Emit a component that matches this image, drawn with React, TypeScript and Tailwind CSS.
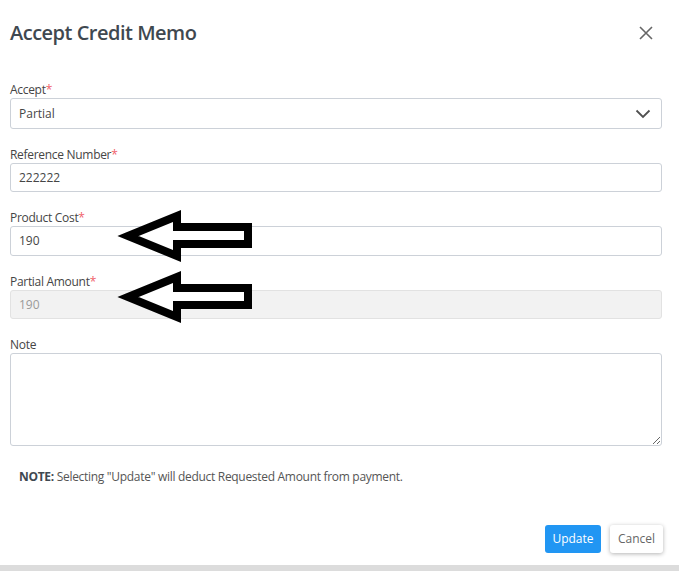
import React from "react";

const font = { fontFamily: '"Open Sans", "Noto Sans", Arial, sans-serif' };

function Label({ text }: { text: string }) {
  return (
    <div className="h-[16px] text-[12px] leading-[16px] tracking-[-0.3px] text-[#454545]">
      {text}
      <span className="text-[#f0606a]">*</span>
    </div>
  );
}

function Arrow() {
  return (
    <svg width="150" height="64" viewBox="0 0 150 64" className="pointer-events-none">
      <polygon
        points="16,31 65,11 65,22 136,22 136,39 65,39 65,51"
        fill="white"
        stroke="black"
        strokeWidth="8"
        strokeLinejoin="miter"
      />
    </svg>
  );
}

export default function App() {
  return (
    <div className="relative h-[571px] w-[679px] overflow-hidden bg-white" style={font}>
      <div className="h-[565px] pl-[10px] pr-[17px]">
        <div className="flex h-[70px] items-start justify-between pt-[19px]">
          <h2 className="text-[20px] font-semibold leading-[28px] tracking-[-0.5px] text-[#3f4850]">Accept Credit Memo</h2>
          <button className="mr-[9px] mt-[7px] text-[#666]">
            <svg width="14" height="14" viewBox="0 0 14 14">
              <path d="M1 1L13 13M13 1L1 13" stroke="currentColor" strokeWidth="1.6" fill="none" />
            </svg>
          </button>
        </div>

        <div className="mt-[12px] flex flex-col gap-[18px]">
          <div>
            <Label text="Accept" />
            <div className="flex h-[31px] items-center justify-between rounded-[3px] border border-[#ccd1d8] px-[8px] text-[12px] text-[#454545]">
              <span>Partial</span>
              <svg width="16" height="10" viewBox="0 0 16 10" className="mr-[2px]">
                <path d="M1.5 1.5L8 8L14.5 1.5" stroke="#505050" strokeWidth="1.8" fill="none" />
              </svg>
            </div>
          </div>
          <div>
            <Label text="Reference Number" />
            <div className="flex h-[29px] items-center rounded-[3px] border border-[#ccd1d8] px-[8px] text-[12px] text-[#454545]">
              222222
            </div>
          </div>
          <div>
            <Label text="Product Cost" />
            <div className="flex h-[30px] items-center rounded-[3px] border border-[#ccd1d8] px-[8px] text-[12px] text-[#454545]">
              190
            </div>
          </div>
          <div>
            <Label text="Partial Amount" />
            <div className="flex h-[29px] items-center rounded-[3px] border border-[#e2e2e2] bg-[#f2f2f2] px-[8px] text-[12px] text-[#9a9a9a]">
              190
            </div>
          </div>
          <div>
            <div className="h-[16px] text-[12px] leading-[16px] tracking-[-0.3px] text-[#454545]">Note</div>
            <textarea className="block h-[93px] w-full resize-y rounded-[3px] border border-[#ccd1d8] outline-none" />
          </div>
        </div>

        <p className="mt-[23px] pl-[9px] text-[12px] leading-[16px] tracking-[-0.3px] text-[#555]">
          <span className="font-bold text-[#3f4850]">NOTE:</span> Selecting "Update" will deduct Requested Amount from payment.
        </p>

        <div className="mt-[40px] flex justify-end gap-[9px]">
          <button className="h-[28px] w-[56px] rounded-[3px] bg-[#2196f3] text-[12px] text-white">Update</button>
          <button className="mr-[-1px] h-[28px] w-[53px] rounded-[3px] bg-white text-[12px] text-[#666] shadow-[0_1px_4px_rgba(0,0,0,0.3)]">
            Cancel
          </button>
        </div>
      </div>
      <div className="h-[6px] bg-[#dcdcdc]" />

      <div className="absolute left-[112px] top-[205px]">
        <Arrow />
      </div>
      <div className="absolute left-[112px] top-[266px]">
        <Arrow />
      </div>
    </div>
  );
}
